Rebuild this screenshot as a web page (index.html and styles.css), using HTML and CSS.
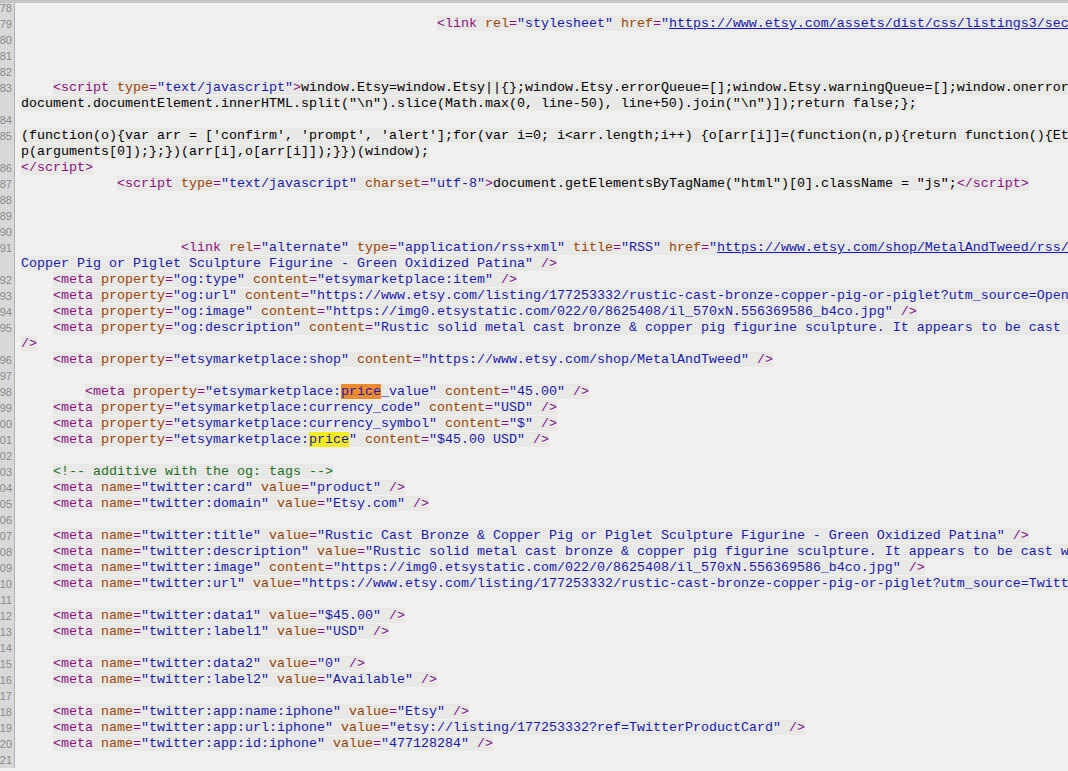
FILE: index.html
```html
<!DOCTYPE html>
<html lang="en">
<head>
<meta charset="utf-8">
<title>view-source</title>
<link rel="stylesheet" href="styles.css">
</head>
<body>

<div class="bar"></div>

<div class="src">
<div class="ln"><span class="no">78</span><span class="code"></span></div>
<div class="ln"><span class="no">79</span><span class="code">                                                    <span class="t"><span class="tg">&lt;link <span class="an">rel</span>=<span class="av">"stylesheet"</span> <span class="an">href</span>=<span class="av">"<a class="lk">https://www.etsy.com/assets/dist/css/listings3/secondary.css</a>"</span>&gt;</span></span></span></div>
<div class="ln"><span class="no">80</span><span class="code"></span></div>
<div class="ln"><span class="no">81</span><span class="code"></span></div>
<div class="ln"><span class="no">82</span><span class="code"></span></div>
<div class="ln"><span class="no">83</span><span class="code">    <span class="t"><span class="tg">&lt;script <span class="an">type</span>=<span class="av">"text/javascript"</span>&gt;</span>window.Etsy=window.Etsy||{};window.Etsy.errorQueue=[];window.Etsy.warningQueue=[];window.onerror=function(msg, url, line){Etsy.errorQueue.push([msg, url, line,</span></span></div>
<div class="ln"><span class="no"></span><span class="code"><span class="t">document.documentElement.innerHTML.split("\n").slice(Math.max(0, line-50), line+50).join("\n")]);return false;};</span></span></div>
<div class="ln"><span class="no">84</span><span class="code"></span></div>
<div class="ln"><span class="no">85</span><span class="code"><span class="t">(function(o){var arr = ['confirm', 'prompt', 'alert'];for(var i=0; i&lt;arr.length;i++) {o[arr[i]]=(function(n,p){return function(){Etsy.warningQueue.push(n);return</span></span></div>
<div class="ln"><span class="no"></span><span class="code"><span class="t">p(arguments[0]);};})(arr[i],o[arr[i]]);}})(window);</span></span></div>
<div class="ln"><span class="no">86</span><span class="code"><span class="t"><span class="tg">&lt;/script&gt;</span></span></span></div>
<div class="ln"><span class="no">87</span><span class="code">            <span class="t"><span class="tg">&lt;script <span class="an">type</span>=<span class="av">"text/javascript"</span> <span class="an">charset</span>=<span class="av">"utf-8"</span>&gt;</span>document.getElementsByTagName("html")[0].className = "js";<span class="tg">&lt;/script&gt;</span></span></span></div>
<div class="ln"><span class="no">88</span><span class="code"></span></div>
<div class="ln"><span class="no">89</span><span class="code"></span></div>
<div class="ln"><span class="no">90</span><span class="code"></span></div>
<div class="ln"><span class="no">91</span><span class="code">                    <span class="t"><span class="tg">&lt;link <span class="an">rel</span>=<span class="av">"alternate"</span> <span class="an">type</span>=<span class="av">"application/rss+xml"</span> <span class="an">title</span>=<span class="av">"RSS"</span> <span class="an">href</span>=<span class="av">"<a class="lk">https://www.etsy.com/shop/MetalAndTweed/rss/</a>"</span> <span class="an">data-title</span>=<span class="av">"Rustic Cast Bronze &amp; </span></span></span></span></div>
<div class="ln"><span class="no"></span><span class="code"><span class="t"><span class="av">Copper Pig or Piglet Sculpture Figurine - Green Oxidized Patina"</span> <span class="tg">/&gt;</span></span></span></div>
<div class="ln"><span class="no">92</span><span class="code">    <span class="t"><span class="tg">&lt;meta <span class="an">property</span>=<span class="av">"og:type"</span> <span class="an">content</span>=<span class="av">"etsymarketplace:item"</span> /&gt;</span></span></span></div>
<div class="ln"><span class="no">93</span><span class="code">    <span class="t"><span class="tg">&lt;meta <span class="an">property</span>=<span class="av">"og:url"</span> <span class="an">content</span>=<span class="av">"https://www.etsy.com/listing/177253332/rustic-cast-bronze-copper-pig-or-piglet?utm_source=OpenGraph&amp;utm_medium=PageTools"</span> /&gt;</span></span></span></div>
<div class="ln"><span class="no">94</span><span class="code">    <span class="t"><span class="tg">&lt;meta <span class="an">property</span>=<span class="av">"og:image"</span> <span class="an">content</span>=<span class="av">"https://img0.etsystatic.com/022/0/8625408/il_570xN.556369586_b4co.jpg"</span> /&gt;</span></span></span></div>
<div class="ln"><span class="no">95</span><span class="code">    <span class="t"><span class="tg">&lt;meta <span class="an">property</span>=<span class="av">"og:description"</span> <span class="an">content</span>=<span class="av">"Rustic solid metal cast bronze &amp; copper pig figurine sculpture. It appears to be cast with a green patina"</span></span></span></span></div>
<div class="ln"><span class="no"></span><span class="code"><span class="t"><span class="tg">/&gt;</span></span></span></div>
<div class="ln"><span class="no">96</span><span class="code">    <span class="t"><span class="tg">&lt;meta <span class="an">property</span>=<span class="av">"etsymarketplace:shop"</span> <span class="an">content</span>=<span class="av">"https://www.etsy.com/shop/MetalAndTweed"</span> /&gt;</span></span></span></div>
<div class="ln"><span class="no">97</span><span class="code"></span></div>
<div class="ln"><span class="no">98</span><span class="code">        <span class="t"><span class="tg">&lt;meta <span class="an">property</span>=<span class="av">"etsymarketplace:<span class="f1">price</span>_value"</span> <span class="an">content</span>=<span class="av">"45.00"</span> /&gt;</span></span></span></div>
<div class="ln"><span class="no">99</span><span class="code">    <span class="t"><span class="tg">&lt;meta <span class="an">property</span>=<span class="av">"etsymarketplace:currency_code"</span> <span class="an">content</span>=<span class="av">"USD"</span> /&gt;</span></span></span></div>
<div class="ln"><span class="no">100</span><span class="code">    <span class="t"><span class="tg">&lt;meta <span class="an">property</span>=<span class="av">"etsymarketplace:currency_symbol"</span> <span class="an">content</span>=<span class="av">"$"</span> /&gt;</span></span></span></div>
<div class="ln"><span class="no">101</span><span class="code">    <span class="t"><span class="tg">&lt;meta <span class="an">property</span>=<span class="av">"etsymarketplace:<span class="f2">price</span>"</span> <span class="an">content</span>=<span class="av">"$45.00 USD"</span> /&gt;</span></span></span></div>
<div class="ln"><span class="no">102</span><span class="code"></span></div>
<div class="ln"><span class="no">103</span><span class="code">    <span class="t"><span class="cm">&lt;!-- additive with the og: tags --&gt;</span></span></span></div>
<div class="ln"><span class="no">104</span><span class="code">    <span class="t"><span class="tg">&lt;meta <span class="an">name</span>=<span class="av">"twitter:card"</span> <span class="an">value</span>=<span class="av">"product"</span> /&gt;</span></span></span></div>
<div class="ln"><span class="no">105</span><span class="code">    <span class="t"><span class="tg">&lt;meta <span class="an">name</span>=<span class="av">"twitter:domain"</span> <span class="an">value</span>=<span class="av">"Etsy.com"</span> /&gt;</span></span></span></div>
<div class="ln"><span class="no">106</span><span class="code"></span></div>
<div class="ln"><span class="no">107</span><span class="code">    <span class="t"><span class="tg">&lt;meta <span class="an">name</span>=<span class="av">"twitter:title"</span> <span class="an">value</span>=<span class="av">"Rustic Cast Bronze &amp; Copper Pig or Piglet Sculpture Figurine - Green Oxidized Patina"</span> /&gt;</span></span></span></div>
<div class="ln"><span class="no">108</span><span class="code">    <span class="t"><span class="tg">&lt;meta <span class="an">name</span>=<span class="av">"twitter:description"</span> <span class="an">value</span>=<span class="av">"Rustic solid metal cast bronze &amp; copper pig figurine sculpture. It appears to be cast with a green patina"</span> /&gt;</span></span></span></div>
<div class="ln"><span class="no">109</span><span class="code">    <span class="t"><span class="tg">&lt;meta <span class="an">name</span>=<span class="av">"twitter:image"</span> <span class="an">content</span>=<span class="av">"https://img0.etsystatic.com/022/0/8625408/il_570xN.556369586_b4co.jpg"</span> /&gt;</span></span></span></div>
<div class="ln"><span class="no">110</span><span class="code">    <span class="t"><span class="tg">&lt;meta <span class="an">name</span>=<span class="av">"twitter:url"</span> <span class="an">value</span>=<span class="av">"https://www.etsy.com/listing/177253332/rustic-cast-bronze-copper-pig-or-piglet?utm_source=Twitter&amp;utm_medium=PageTools"</span> /&gt;</span></span></span></div>
<div class="ln"><span class="no">111</span><span class="code"></span></div>
<div class="ln"><span class="no">112</span><span class="code">    <span class="t"><span class="tg">&lt;meta <span class="an">name</span>=<span class="av">"twitter:data1"</span> <span class="an">value</span>=<span class="av">"$45.00"</span> /&gt;</span></span></span></div>
<div class="ln"><span class="no">113</span><span class="code">    <span class="t"><span class="tg">&lt;meta <span class="an">name</span>=<span class="av">"twitter:label1"</span> <span class="an">value</span>=<span class="av">"USD"</span> /&gt;</span></span></span></div>
<div class="ln"><span class="no">114</span><span class="code"></span></div>
<div class="ln"><span class="no">115</span><span class="code">    <span class="t"><span class="tg">&lt;meta <span class="an">name</span>=<span class="av">"twitter:data2"</span> <span class="an">value</span>=<span class="av">"0"</span> /&gt;</span></span></span></div>
<div class="ln"><span class="no">116</span><span class="code">    <span class="t"><span class="tg">&lt;meta <span class="an">name</span>=<span class="av">"twitter:label2"</span> <span class="an">value</span>=<span class="av">"Available"</span> /&gt;</span></span></span></div>
<div class="ln"><span class="no">117</span><span class="code"></span></div>
<div class="ln"><span class="no">118</span><span class="code">    <span class="t"><span class="tg">&lt;meta <span class="an">name</span>=<span class="av">"twitter:app:name:iphone"</span> <span class="an">value</span>=<span class="av">"Etsy"</span> /&gt;</span></span></span></div>
<div class="ln"><span class="no">119</span><span class="code">    <span class="t"><span class="tg">&lt;meta <span class="an">name</span>=<span class="av">"twitter:app:url:iphone"</span> <span class="an">value</span>=<span class="av">"etsy://listing/177253332?ref=TwitterProductCard"</span> /&gt;</span></span></span></div>
<div class="ln"><span class="no">120</span><span class="code">    <span class="t"><span class="tg">&lt;meta <span class="an">name</span>=<span class="av">"twitter:app:id:iphone"</span> <span class="an">value</span>=<span class="av">"477128284"</span> /&gt;</span></span></span></div>
<div class="ln"><span class="no">121</span><span class="code"></span></div>
</div>

</body>
</html>
```

FILE: styles.css
```css
html {
	background: #f0f0ee;
}

body {
	margin: 0;
	padding: 0;
	height: 771px;
	overflow: hidden;
	background: #f0f0ee;
}

/* grey strip along the top edge */
.bar {
	position: relative;
	z-index: 1;
	height: 3px;
	background: #c4c4c4;
}

.src {
	margin-top: -3px;
	font-family: "Liberation Mono", "DejaVu Sans Mono", monospace;
	font-size: 13.333px;
	line-height: 16px;
	color: #000;
}

.ln {
	display: grid;
	grid-template-columns: 15px 1fr;
	height: 16px;
}

/* gutter is clipped, so the 100s only show their last two digits */
.no {
	box-sizing: border-box;
	display: flex;
	justify-content: flex-end;
	overflow: hidden;
	padding-right: 2px;
	background: #d8d8d8;
	border-right: 1px solid #b2b2b2;
	font-family: "Liberation Sans", Arial, sans-serif;
	font-size: 11px;
	line-height: 16px;
	color: #8a8a8a;
	white-space: nowrap;
}

.code {
	padding-left: 6px;
	white-space: pre;
	overflow: hidden;
}

.t {
	background: #e8e8e6;
}

.tg {
	color: #881280;
}

.an {
	color: #994500;
}

.av {
	color: #1a1aa6;
}

.cm {
	color: #236e25;
}

.lk {
	color: #1a1aa6;
	text-decoration: underline;
}

.f1 {
	background: #f08a2c;
}

.f2 {
	background: #f2ec1c;
}
```
